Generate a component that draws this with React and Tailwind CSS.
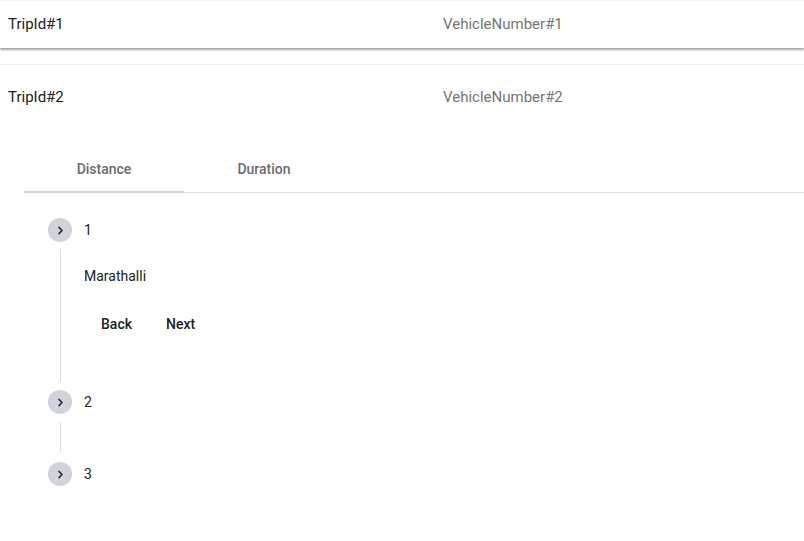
import React, { useState } from "react";

const Chevron = () => (
  <svg width="11" height="11" viewBox="0 0 24 24" fill="none">
    <path d="M8.6 5.2 15.4 12l-6.8 6.8" stroke="#1f2937" strokeWidth="3.4" strokeLinecap="round" strokeLinejoin="round" />
  </svg>
);

const StepIcon = () => (
  <div className="w-6 h-6 rounded-full bg-[#d1d5db] flex items-center justify-center shrink-0">
    <Chevron />
  </div>
);

const TripRow = ({ trip, vehicle, tall }) => (
  <div className={`flex items-center px-2 ${tall ? "h-16" : "h-[47px]"}`}>
    <div className="w-[435px] text-[15px] text-[#212121]">{trip}</div>
    <div className="text-[15px] text-[#757575]">{vehicle}</div>
  </div>
);

export default function App() {
  const [tab, setTab] = useState(0);

  return (
    <div className="w-[804px] h-[541px] overflow-hidden bg-white" style={{ fontFamily: "Roboto, 'Noto Sans', sans-serif" }}>
      {/* collapsed panel */}
      <div className="border-t border-[#f2f2f2] shadow-[0_2px_2px_rgba(0,0,0,0.35)] bg-white relative z-10">
        <TripRow trip="TripId#1" vehicle="VehicleNumber#1" />
      </div>

      {/* expanded panel */}
      <div className="mt-4 border-t border-[#f0f0f0] bg-white">
        <TripRow trip="TripId#2" vehicle="VehicleNumber#2" tall />

        <div className="pl-6 pt-[18px]">
          <div className="flex border-b border-[#e0e0e0]">
            {["Distance", "Duration"].map((t, i) => (
              <button
                key={t}
                onClick={() => setTab(i)}
                className={`w-40 h-[46px] text-sm font-medium text-[#6b6b6b] flex items-center justify-center border-b-2 -mb-px ${tab === i ? "border-[#d1d5db]" : "border-transparent"}`}
              >
                {t}
              </button>
            ))}
          </div>

          {/* stepper */}
          <div className="pl-6 pt-[25px]">
            <div className="flex items-center gap-3 h-6">
              <StepIcon />
              <span className="text-sm text-[#212121]">1</span>
            </div>
            <div className="ml-3 mt-2 border-l border-[#dcdcdc] pl-[23px] pt-[16px] h-[131px]">
              <div className="text-sm text-[#212121]">Marathalli</div>
              <div className="flex mt-5 ml-px gap-0.5">
                <button className="px-4 h-9 text-sm font-medium text-[#212121]">Back</button>
                <button className="px-4 h-9 text-sm font-medium text-[#212121]">Next</button>
              </div>
            </div>
            <div className="flex items-center gap-3 h-6 mt-[9px]">
              <StepIcon />
              <span className="text-sm text-[#212121]">2</span>
            </div>
            <div className="ml-3 mt-2 border-l border-[#dcdcdc] h-[30px]" />
            <div className="flex items-center gap-3 h-6 mt-[10px]">
              <StepIcon />
              <span className="text-sm text-[#212121]">3</span>
            </div>
          </div>
        </div>
      </div>
    </div>
  );
}
